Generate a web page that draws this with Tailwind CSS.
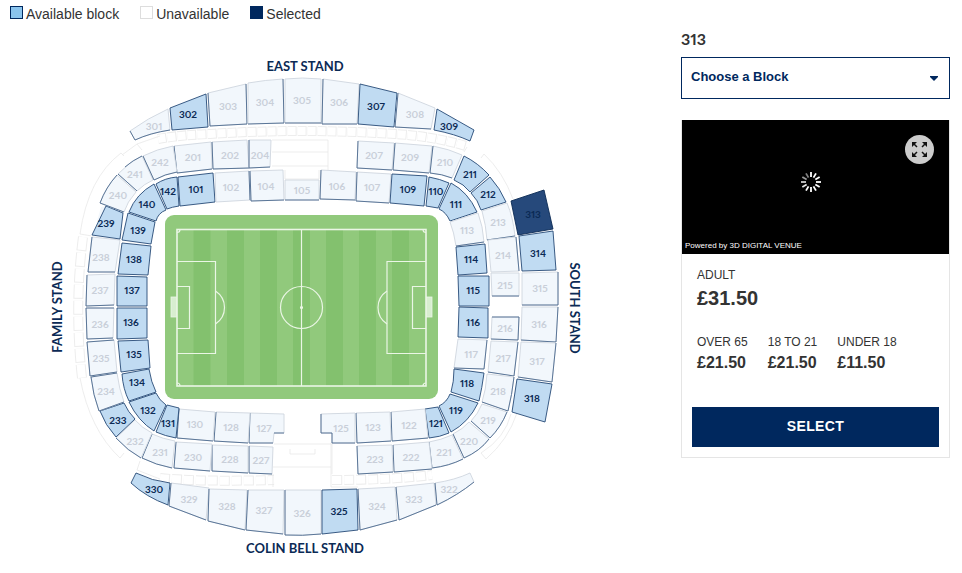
<!DOCTYPE html>
<html lang="en">
<head>
  <meta charset="UTF-8" />
  <title>Choose a Block</title>
  <meta name="viewport" content="width=device-width, initial-scale=1" />
  <script src="https://cdn.jsdelivr.net/npm/@tailwindcss/browser@4"></script>
</head>
<body class="bg-white text-[#333] font-['Liberation_Sans',Arial,sans-serif]">

  <div class="flex flex-col md:flex-row md:items-start md:pr-3">

    <!-- Stadium -->
    <main class="flex-1 min-w-0">
      <ul class="flex flex-wrap gap-x-[21px] h-7 pl-[10px] text-sm leading-7">
        <li class="flex items-center gap-[3px]"><span class="size-[13px] mb-1 border border-[#00285e] bg-[#8ac4ed]"></span>Available block</li>
        <li class="flex items-center gap-[3px]"><span class="size-[13px] mb-1 border border-[#ddd] bg-white"></span>Unavailable</li>
        <li class="flex items-center gap-[3px]"><span class="size-[13px] mb-1 bg-[#00285e]"></span>Selected</li>
      </ul>

      <svg viewBox="0 28 681 540" class="block w-full font-['Lato',sans-serif] font-bold" role="img" aria-label="Stadium map">
        <!-- Concourse -->
        <g fill="none" stroke="#ededed">
          <path stroke-width="10" stroke-dasharray="9 1" d="M158 139Q180 135 210 134Q300 128 395 134Q432 136 466 146" />
          <path stroke-width="10" stroke-dasharray="10 2" d="M160 478Q200 482 274 480M332 480Q390 480 432 475" />
          <path stroke-width="10" stroke-dasharray="14 2" d="M83 237Q74 306 82 378" />
        </g>
        <g fill="none" stroke="#fff">
          <path stroke-width="8" stroke-dasharray="8 2" d="M158 139Q180 135 210 134Q300 128 395 134Q432 136 466 146" />
          <path stroke-width="8" stroke-dasharray="9 3" d="M160 478Q200 482 274 480M332 480Q390 480 432 475" />
          <path stroke-width="8" stroke-dasharray="13 3" d="M83 237Q74 306 82 378" />
        </g>
        <g fill="none" stroke="#e8e8e8" stroke-width="0.8">
          <path d="M92 236L80 234Q88 178 121 153L124 156M122 155L137 144L142 150M137 144L160 136" />
          <path d="M80 378Q90 430 120 458L124 453M140 461L137 470L160 479" />
          <path d="M517 413Q508 440 486 459L481 453Q505 438 511 414M481 158L484 154Q503 172 513 199M467 147L464 152" />
          <path d="M272 140H328V170M272 152H328M272 166H328M285 170V179M319 170V179H285" />
          <path d="M274 444H332V474M290 449V454H315V449M273 467H331M273 474V487M331 443V487H358" />
        </g>
        <path d="M101 207L106 206L111 208L94 232Z" fill="#f2f7fc" />

        <g id="blocks"></g>

        <!-- Pitch -->
        <rect x="165" y="215" width="273" height="184" rx="9" fill="#91c97c" />
        <g fill="#83c16e">
          <rect x="193.500" y="229" width="17" height="157" />
          <rect x="227" y="229" width="17" height="157" />
          <rect x="260" y="229" width="17" height="157" />
          <rect x="293" y="229" width="17" height="157" />
          <rect x="326" y="229" width="17" height="157" />
          <rect x="359" y="229" width="17" height="157" />
          <rect x="392" y="229" width="17" height="157" />
        </g>
        <g fill="none" stroke="#eaf6e5" stroke-width="1.2">
          <rect x="177" y="229.500" width="249" height="156.500" stroke-width="1.600" />
          <path d="M301.500 229.500V386" />
          <circle cx="301.500" cy="307.500" r="21" />
          <circle cx="301.500" cy="307.500" r="1" fill="#eaf6e5" />
          <path d="M177 261.500H215.500V353.500H177M177 286.500H189.500V328.500H177" />
          <path d="M426 261.500H387V353.500H426M426 286.500H412.500V328.500H426" />
          <path d="M215.500 291Q224.500 297 224.500 307.500T215.500 324M387 291Q378 297 378 307.500T387 324" />
          <path d="M177 232.500A3 3 0 0 0 180 229.500M423 229.500A3 3 0 0 0 426 232.500M177 383A3 3 0 0 1 180 386M423 386A3 3 0 0 1 426 383" />
        </g>
        <g fill="#d8eed0" stroke="#eaf6e5" stroke-width="0.8">
          <rect x="171" y="297" width="5.500" height="20" />
          <rect x="426.500" y="297" width="5.500" height="20" />
        </g>

        <g fill="#0b2a55" font-size="13" text-anchor="middle">
          <text x="305" y="71">EAST STAND</text>
          <text x="305" y="553">COLIN BELL STAND</text>
          <text transform="translate(62 307) rotate(-90)">FAMILY STAND</text>
          <text transform="translate(570 308) rotate(90)">SOUTH STAND</text>
        </g>
      </svg>
    </main>

    <!-- Block picker -->
    <aside class="w-full md:w-[269px] shrink-0 pt-[29px] px-3 md:px-0">
      <label for="block" class="block text-base leading-5 mb-2 font-bold font-['Lato',sans-serif] proportional-nums">313</label>
      <div class="relative">
        <select id="block" class="appearance-none block w-full h-[42px] border border-[#00285e] bg-white pl-[9px] pb-[2px] text-[13px] font-bold text-[#00285e]">
          <option>Choose a Block</option>
        </select>
        <svg viewBox="0 0 8 5" class="absolute right-3 top-[19px] w-2 h-[5px] pointer-events-none" fill="#00285e"><path d="M0 0H8V1L4 5L0 1Z" /></svg>
      </div>

      <section class="mt-[21px] border border-t-0 border-[#e5e5e5]">
        <div class="relative h-[134px] bg-black flex items-center justify-center">
          <svg viewBox="-10 -10 20 20" class="size-5 mr-[10px] mt-[-10px]" stroke="#fff" stroke-width="1.800" id="spinner"></svg>
          <button type="button" aria-label="Full screen" class="absolute right-[15px] top-[15px] size-[29px] rounded-full bg-[#ccc] flex items-center justify-center">
            <svg viewBox="0 0 15 15" class="size-[15px]" fill="#111" stroke="#111" stroke-width="1.500">
              <path stroke="none" d="M0 0H5L0 5ZM15 0V5L10 0ZM0 15V10L5 15ZM15 15H10L15 10Z" />
              <path d="M1 1L5 5M14 1L10 5M1 14L5 10M14 14L10 10" />
            </svg>
          </button>
          <p class="absolute left-[3px] bottom-[2px] text-[8px] leading-3 text-white">Powered by 3D DIGITAL VENUE</p>
        </div>

        <div class="px-[15px] pt-[14px]">
          <p class="text-xs leading-[14px]">ADULT</p>
          <p class="text-xl leading-6 mt-[4px] font-bold">£31.50</p>
        </div>
        <div class="flex gap-5 px-[15px] mt-[25px]">
          <div>
            <p class="text-xs leading-[14px]">OVER 65</p>
            <p class="text-base leading-5 mt-[4px] font-bold">£21.50</p>
          </div>
          <div>
            <p class="text-xs leading-[14px]">18 TO 21</p>
            <p class="text-base leading-5 mt-[4px] font-bold">£21.50</p>
          </div>
          <div>
            <p class="text-xs leading-[14px]">UNDER 18</p>
            <p class="text-base leading-5 mt-[4px] font-bold">£11.50</p>
          </div>
        </div>
        <div class="p-[10px] pt-[34px]">
          <button type="button" class="w-full h-10 pb-[2px] bg-[#00285e] text-white text-sm font-bold tracking-wide">SELECT</button>
        </div>
      </section>
    </aside>
  </div>

  <script>
    // [block, label x, label y, outline, dark edge]; a = available, s = selected, u = unavailable
    const blocks = [
      ["301", 154, 126, "M130 131Q148 118 168 109L170 130Q150 133 135 140Z", "M130 131L135 140Q150 133 170 130", "u"],
      ["302", 188, 114, "M170 108L206 94L208 127L172 130Z", "", "a"],
      ["303", 228, 106, "M208 93L246 84L247 124L210 126Z", "M208 93L210 126L247 124L246 84", "u"],
      ["304", 265, 102, "M248 83Q265 80 283 79L284 123L248 124Z", "M248 124L284 123L283 79", "u"],
      ["305", 302, 100, "M285 79Q302 77 321 79L321 123L285 123Z", "M285 123H321", "u"],
      ["306", 339, 102, "M323 79L359 84L357 124L322 124Z", "M323 79L322 124H357", "u"],
      ["307", 376, 106, "M360 84L397 93L394 127L358 124Z", "", "a"],
      ["308", 415, 114, "M398 93L435 108L431 129L395 127Z", "M398 93L395 127L431 129", "u"],
      ["309", 449, 126, "M437 109L474 130L470 141Q455 134 434 130Z", "", "a"],

      ["201", 193, 157, "M174 146L211 142L212 169L177 173Z", "M174 146L177 173L212 169", "u"],
      ["202", 230, 155, "M212 142L247 140L249 168L213 169Z", "M212 142L213 169L249 168", "u"],
      ["204", 260, 155, "M249 140H271L270 167L249 168Z", "M249 140V168L270 167", "u"],
      ["207", 374, 155, "M358 141L394 143L392 170L357 168Z", "M358 141L357 168L392 170", "u"],
      ["209", 410, 157, "M395 143L432 146L429 173L393 170Z", "M395 143L393 170L429 173", "u"],
      ["210", 445, 162, "M433 146Q449 149 462 155L452 178Q442 174 430 173Z", "M433 146L430 173Q442 174 452 178", "u"],
      ["211", 470, 174, "M464 156Q478 163 489 175L470 192Q464 184 454 180Z", "", "a"],
      ["212", 488, 194, "M490 177Q500 188 506 202L481 210Q478 200 471 193Z", "", "a"],
      ["213", 498, 222, "M507 203Q513 217 515 236L487 240Q486 225 482 211Z", "M515 236L487 240", "u"],
      ["214", 503, 255, "M516 237L519 271L491 272L488 240Z", "M516 237L519 271", "u"],
      ["215", 505, 285, "M491 273H519V296H492Z", "M492 296H519", "u"],
      ["216", 505, 328, "M492 317H519L518 340L491 339Z", "M492 317H519L518 340L491 339", "u"],
      ["217", 503, 358, "M491 341L518 342L514 376L488 372Z", "M518 342L514 376L488 372", "u"],
      ["218", 498, 391, "M487 374L514 377Q512 395 508 411L482 402Q486 390 487 374Z", "M514 377Q512 395 508 411L482 402", "u"],
      ["219", 488, 420, "M482 404L507 412Q501 427 490 438L471 421Q478 414 482 404Z", "M507 412Q501 427 490 438L471 421", "u"],
      ["220", 469, 441, "M469 422L489 439Q480 451 464 458L453 434Q463 429 469 422Z", "M489 439Q480 451 464 458L453 434", "u"],
      ["221", 444, 452, "M452 435L463 459Q449 466 432 468L429 442Q441 440 452 435Z", "M463 459Q449 466 432 468L429 442", "u"],
      ["222", 411, 457, "M393 445L429 442L432 469L394 472Z", "M393 445L394 472L432 469", "u"],
      ["223", 375, 459, "M357 446L392 445L393 472L358 474Z", "M357 446L358 474L393 472", "u"],
      ["227", 261, 460, "M249 446L273 447L272 474L249 473Z", "M249 446V473L272 474", "u"],
      ["228", 230, 459, "M212 445L248 446V473L212 471Z", "M212 445V471L248 473", "u"],
      ["230", 193, 457, "M176 442L212 444L210 471L174 468Z", "M176 442L174 468L210 471", "u"],
      ["231", 160, 452, "M152 434Q163 439 175 441L172 468Q156 465 142 458Z", "M152 434L142 458Q156 465 172 468", "u"],
      ["232", 135, 441, "M135 420Q142 428 152 433L141 458Q128 451 116 438Z", "M141 458Q128 451 116 438", "u"],
      ["233", 118, 420, "M124 403Q128 412 135 419L116 437Q105 425 100 411Z", "", "a"],
      ["234", 106, 391, "M117 373Q119 389 124 402L99 411Q93 395 91 377Z", "M117 373L91 377Q93 395 99 411L124 402", "u"],
      ["235", 101, 358, "M114 340L117 372L90 376L87 342Z", "M114 340L87 342L90 376L117 372", "u"],
      ["236", 100, 324, "M86 308H114L113 338L87 339Z", "M114 308H86L87 339L113 338", "u"],
      ["237", 100, 290, "M87 275L115 274L114 305L86 306Z", "M87 275L86 306L114 305", "u"],
      ["238", 101, 257, "M92 237L120 240L115 272L88 272Z", "M92 237L88 272H115", "u"],
      ["239", 106, 223, "M106 206L123 213L120 239L92 235Z", "", "a"],
      ["240", 118, 195, "M117 175L136 192Q127 202 124 212L100 203Q106 187 117 175Z", "M124 212L100 203Q106 187 117 175", "u"],
      ["241", 135, 174, "M142 156L153 180Q144 184 137 191L118 174Q129 162 142 156Z", "M137 191L118 174M125 167Q133 160 142 156", "u"],
      ["242", 160, 162, "M173 146L177 172Q165 174 154 180L143 156Q157 149 173 146Z", "M143 156L154 180Q165 174 177 172", "u"],

      ["101", 196, 189, "M178 177L213 173L215 202L180 206Z", "", "a"],
      ["102", 231, 187, "M215 173L249 171L250 200L216 202Z", "M249 171L250 200", "u"],
      ["104", 266, 186, "M250 171L283 170L284 200L251 201Z", "M250 171L251 201L284 200", "u"],
      ["105", 302, 190, "M285 180H319V200H285Z", "M285 200H319", "u"],
      ["106", 337, 186, "M321 170L356 172L355 200L320 199Z", "M321 170L320 199L355 200", "u"],
      ["107", 372, 187, "M357 172L391 174L389 203L356 201Z", "M357 172L356 201L389 203", "u"],
      ["109", 408, 189, "M392 174L427 176L424 206L390 203Z", "", "a"],
      ["110", 436, 191, "M429 177Q440 179 449 183L438 208L426 206Z", "", "a"],
      ["111", 456, 204, "M451 183Q468 192 477 212L450 221Q446 212 439 209Z", "", "a"],
      ["113", 467, 230, "M478 213Q483 226 484 242L456 246Q454 232 450 222Z", "M484 242L456 246", "u"],
      ["114", 471, 259, "M485 244L487 273L458 275L456 247Z", "", "a"],
      ["115", 473, 290, "M458 276H489V306H459Z", "", "a"],
      ["116", 473, 322, "M459 307L488 308V338L458 337Z", "", "a"],
      ["117", 471, 354, "M458 339L487 340L484 369L454 368Z", "M487 340L484 369L454 368", "u"],
      ["118", 467, 383, "M454 369L484 373Q482 388 479 401L451 392Q454 382 454 369Z", "", "a"],
      ["119", 456, 410, "M450 394L478 403Q469 422 451 432L439 406Q447 402 450 394Z", "", "a"],
      ["121", 436, 423, "M438 407L449 433Q440 437 429 438L425 409Z", "", "a"],
      ["122", 409, 425, "M391 412L425 409L428 438L392 441Z", "M391 412L392 441L428 438", "u"],
      ["123", 373, 427, "M356 413L390 412L391 441L357 443Z", "M356 413L357 443L391 441", "u"],
      ["125", 341, 428, "M321 414L355 413V443H332V433H321Z", "M321 414V433H332V443H355", "u"],
      ["127", 264, 428, "M250 413L284 414V433H274L273 443H249Z", "M250 413L249 443H273M274 433H284", "u"],
      ["128", 231, 427, "M216 412L250 413L248 443L214 441Z", "M216 412L214 441L248 443", "u"],
      ["130", 195, 424, "M179 409L215 412L213 441L177 438Z", "M179 409L177 438L213 441", "u"],
      ["131", 168, 423, "M167 405L179 408L176 438Q165 436 156 432Z", "", "a"],
      ["132", 148, 410, "M156 393Q159 400 166 405L154 431Q138 421 129 402Z", "", "a"],
      ["134", 137, 382, "M149 369Q151 382 156 392L129 401Q123 389 122 374Z", "", "a"],
      ["135", 134, 354, "M148 340L150 368L121 372L118 341Z", "", "a"],
      ["136", 131, 322, "M117 308H147V338L117 339Z", "", "a"],
      ["137", 132, 290, "M117 276L147 277V306H117Z", "", "a"],
      ["138", 134, 259, "M122 243L151 246L148 275L118 274Z", "", "a"],
      ["139", 138, 230, "M128 213L155 222L151 244L122 240Z", "", "a"],
      ["140", 147, 204, "M154 184L166 210Q158 213 156 221L129 212Q136 194 154 184Z", "", "a"],
      ["142", 168, 191, "M156 184Q165 178 177 177L179 206Q172 207 167 209Z", "", "a"],

      ["313", 533, 214, "M511 201L544 190L553 229L518 235Z", "", "s"],
      ["314", 538, 253, "M519 236L553 231L556 270L522 271Z", "", "a"],
      ["315", 540, 288, "M522 273L558 272V305H522Z", "M522 305H558V272", "u"],
      ["316", 539, 324, "M522 307H558L556 342L521 340Z", "M558 307L556 342L521 340", "u"],
      ["317", 537, 361, "M521 342L556 343L552 382L518 377Z", "M556 343L552 382L518 377", "u"],
      ["318", 532, 398, "M517 379L552 384L545 422L512 412Z", "", "a"],

      ["330", 154, 489, "M136 473Q152 481 170 483L168 505Q146 497 131 483Z", "", "a"],
      ["329", 189, 499, "M171 483L209 488L206 520L169 506Z", "M206 520L169 506L171 483", "u"],
      ["328", 227, 506, "M209 489L247 490L245 530L208 521Z", "M209 489L208 521L245 530", "u"],
      ["327", 264, 510, "M248 490H284L283 534L246 530Z", "M248 490L246 530L283 534", "u"],
      ["326", 302, 513, "M285 490H321V534Q302 536 285 535Z", "M285 490V535Q302 536 321 534", "u"],
      ["325", 339, 511, "M322 490L357 489L358 530L322 534Z", "", "a"],
      ["324", 377, 506, "M358 489L395 487L397 520L360 530Z", "M358 489L360 530L397 520", "u"],
      ["323", 414, 499, "M396 487L434 483L436 505L399 520Z", "M396 487L399 520L436 505", "u"],
      ["322", 449, 489, "M435 483Q455 480 470 473L474 482Q458 495 437 505Z", "M435 483L437 505Q458 495 474 482", "u"],
    ];

    const styles = {
      a: { shape: "fill-[#c0dbf2] stroke-[#264a76]", label: "fill-[#0b2a55]" },
      u: { shape: "fill-[#f2f7fc] stroke-[#cfd6df]", label: "fill-[#c9cfd9]" },
      s: { shape: "fill-[#26497b] stroke-[#0b2a55]", label: "fill-[#0b2a55]" },
    };

    document.getElementById("blocks").innerHTML = blocks.map(([name, x, y, outline, edge, state]) => `
      <g>
        <path d="${outline}" class="${styles[state].shape}" stroke-width="0.9" />
        <path d="${edge}" class="fill-none stroke-[#4c6a8f]" stroke-width="0.9" />
        <text x="${x}" y="${y + 4}" text-anchor="middle" font-size="10" class="${styles[state].label} proportional-nums">${name}</text>
      </g>`).join("");

    // Twelve spokes, fading towards the upper left
    const spokes = [1, 1, 1, 1, 1, 1, 1, 1, 0.9, 0.8, 0.6, 0.5];
    document.getElementById("spinner").innerHTML = spokes.map((opacity, i) =>
      `<path d="M0 -5V-10" opacity="${opacity}" transform="rotate(${i * 30})" />`).join("");
  </script>
</body>
</html>
